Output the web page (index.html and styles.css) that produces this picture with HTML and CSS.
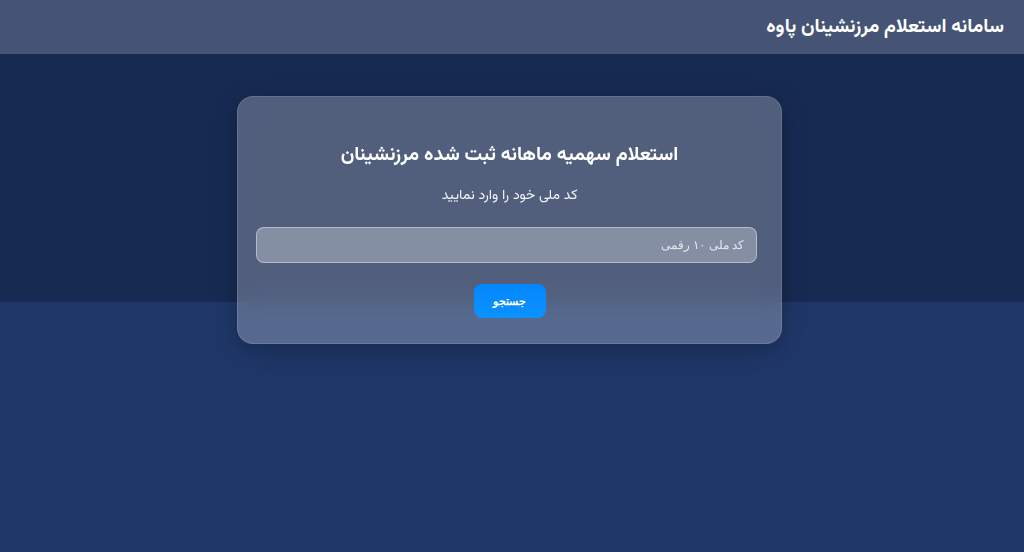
FILE: index.html
```html
<!DOCTYPE html>
<html lang="fa" dir="rtl">
<head>
<meta charset="utf-8">
<title>سامانه استعلام مرزنشینان پاوه</title>
<link rel="stylesheet" href="styles.css">
</head>
<body>
<header class="topbar">
  <h1 class="brand">سامانه استعلام مرزنشینان پاوه</h1>
</header>
<main class="main">
  <section class="card">
    <h2 class="card-title">استعلام سهمیه ماهانه ثبت شده مرزنشینان</h2>
    <p class="card-sub">کد ملی خود را وارد نمایید</p>
    <input class="field" type="text" placeholder="کد ملی ۱۰ رقمی">
    <button class="btn" type="button">جستجو</button>
  </section>
</main>
</body>
</html>
```
FILE: styles.css
```css
* { box-sizing: border-box; }
html, body { margin: 0; padding: 0; }
body {
  width: 1024px;
  height: 552px;
  overflow: hidden;
  font-family: "Vazirmatn", sans-serif;
  color: #fff;
  background: linear-gradient(to bottom, #172a52 0, #172a52 302px, #1f3769 302px, #1f3769 100%);
}
.topbar {
  height: 54px;
  background: rgba(255, 255, 255, 0.2);
  display: flex;
  align-items: center;
  padding: 0 20px;
}
.brand {
  margin: 0;
  font-size: 19.4px;
  font-weight: 700;
  line-height: 30px;
}
.main {
  display: flex;
  justify-content: center;
  padding: 42px 5px 0 0;
}
.card {
  width: 545px;
  height: 248px;
  border-radius: 16px;
  background: rgba(255, 255, 255, 0.25);
  border: 1px solid rgba(255, 255, 255, 0.12);
  box-shadow: 0 6px 24px rgba(0, 0, 0, 0.25);
  -webkit-backdrop-filter: blur(10px);
  backdrop-filter: blur(10px);
  padding: 42px 24px 0;
  display: flex;
  flex-direction: column;
  align-items: center;
}
.card-title {
  margin: 0;
  font-size: 19.5px;
  font-weight: 700;
  line-height: 32px;
}
.card-sub {
  margin: 14px 0 0;
  font-size: 14px;
  line-height: 22px;
  color: #f1f3f8;
}
.field {
  align-self: flex-start;
  margin-top: 20px;
  width: 501px;
  flex: 0 0 36px;
  height: 36px;
  border-radius: 8px;
  border: 1px solid rgba(255, 255, 255, 0.4);
  background: rgba(255, 255, 255, 0.3);
  padding: 0 12px;
  font-size: 12px;
  color: #fff;
  outline: none;
}
.field::placeholder { color: #e4e7ee; }
.btn {
  margin-top: 21px;
  width: 72px;
  height: 34px;
  flex: 0 0 34px;
  border: none;
  border-radius: 8px;
  background: linear-gradient(to bottom, #0386fb, #0c93ff);
  color: #fff;
  font-size: 11px;
  font-weight: 700;
  cursor: pointer;
}
```
